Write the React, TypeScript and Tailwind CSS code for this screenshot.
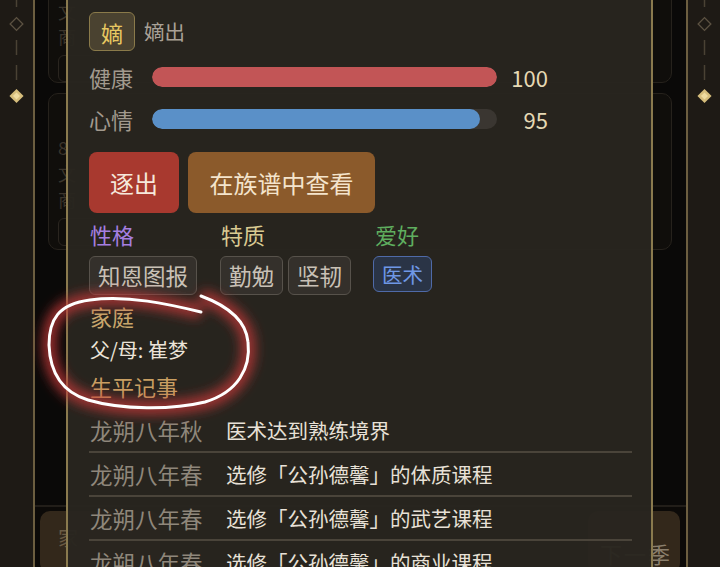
import React from "react";

const events = [
  ["龙朔八年秋", "医术达到熟练境界"],
  ["龙朔八年春", "选修「公孙德馨」的体质课程"],
  ["龙朔八年春", "选修「公孙德馨」的武艺课程"],
  ["龙朔八年春", "选修「公孙德馨」的商业课程"],
];

function SideDeco() {
  return (
    <svg width="32" height="120" viewBox="0 0 32 120" className="block">
      <line x1="16.5" y1="-4" x2="16.5" y2="7" stroke="#4a4234" strokeWidth="1.5" />
      <rect x="12" y="19.5" width="9" height="9" transform="rotate(45 16.5 24)" fill="none" stroke="#5c5242" strokeWidth="1.3" />
      <line x1="16.5" y1="40" x2="16.5" y2="55" stroke="#4a4234" strokeWidth="1.5" />
      <line x1="16.5" y1="65" x2="16.5" y2="80" stroke="#4a4234" strokeWidth="1.5" />
      <rect x="11.5" y="91" width="10" height="10" transform="rotate(45 16.5 96)" fill="#d6bd7c" />
      <rect x="14" y="93.5" width="5" height="5" transform="rotate(45 16.5 96)" fill="#f0dca0" />
    </svg>
  );
}

function Tag({ children, blue }: { children: React.ReactNode; blue?: boolean }) {
  return blue ? (
    <div className="h-[36px] px-[8px] flex items-center rounded-[6px] border-[1.5px] border-[#4f6aa8] bg-[#2a3446] text-[#6f98e6] text-[20.5px] leading-none">
      {children}
    </div>
  ) : (
    <div className="h-[39px] px-[8px] flex items-center rounded-[6px] border-[1.5px] border-[#57524b] bg-[#34302b] text-[#c9c1b6] text-[22.5px] leading-none">
      {children}
    </div>
  );
}

export default function App() {
  return (
    <div className="relative w-[720px] h-[567px] overflow-hidden bg-[#1e1a15] flex font-['Noto_Sans_CJK_SC','Noto_Sans',sans-serif]">
      {/* left deco */}
      <div className="w-[33px] shrink-0">
        <SideDeco />
      </div>

      {/* center page */}
      <div className="relative w-[655px] shrink-0 h-full border-x-2 border-[#6c5e40] bg-[#0a0908] flex flex-col">
        {/* underlying page (dimmed) */}
        <div className="flex flex-col gap-[10px] pl-[13px] pr-[14px] mt-[-80px]">
          <div className="h-[163px] rounded-[10px] border border-[#26221c] bg-[#100e0b] pl-[9px] pt-[78px] flex flex-col text-[18px] text-[#3b352c] leading-[25px]">
            <span>文</span>
            <span>商</span>
            <div className="mt-[6px] w-[40px] h-[28px] rounded-[6px] border border-[#2a251f]" />
          </div>
          <div className="h-[157px] rounded-[10px] border border-[#26221c] bg-[#100e0b] pl-[9px] pt-[40px] flex flex-col text-[18px] text-[#3b352c] leading-[26px]">
            <span>8</span>
            <span>文</span>
            <span>商</span>
            <div className="mt-[6px] w-[40px] h-[28px] rounded-[6px] border border-[#2a251f]" />
          </div>
        </div>
        <div className="mt-auto h-[62px] border-t-2 border-[#221e19] bg-[#0c0a08] flex items-start justify-between pl-[5px] pr-[6px] pt-[4px]">
          <div className="w-[120px] h-[62px] rounded-[10px] bg-[#33281b] text-[#6b5c46] text-[20px] pl-[18px] pt-[12px]">家</div>
          <div className="w-[92px] h-[62px] rounded-[10px] bg-[#33281b] text-[#8a7e6c] text-[22px] pl-[12px] pt-[26px] tracking-[2px]">下一季</div>
        </div>

        {/* modal */}
        <div className="absolute left-[31px] right-[33px] top-0 bottom-[-20px] border-x-2 border-[#8a7a4e] bg-[#29251f]/[0.96] pl-[21px] pr-[19px] pt-[12px] flex flex-col">
          {/* badge row */}
          <div className="flex items-center h-[39px]">
            <div className="w-[46px] h-[39px] rounded-[6px] border-[1.5px] border-[#8a7a4a] bg-[#4a4230] flex items-center justify-center text-[22px] text-[#e8c862] leading-none">
              嫡
            </div>
            <span className="ml-[9px] text-[20.5px] text-[#a9a197] leading-none">嫡出</span>
          </div>

          {/* bars */}
          <div className="mt-[12px] flex items-center h-[28px]">
            <span className="w-[63px] text-[22px] text-[#a29a8e] leading-none">健康</span>
            <div className="w-[345px] h-[20px] rounded-full bg-[#3a3530] overflow-hidden">
              <div className="h-full w-full rounded-full bg-[#c25556]" />
            </div>
            <span className="w-[51px] text-right text-[22px] text-[#e6d9b4] leading-none">100</span>
          </div>
          <div className="mt-[14px] flex items-center h-[28px]">
            <span className="w-[63px] text-[22px] text-[#a29a8e] leading-none">心情</span>
            <div className="w-[345px] h-[20px] rounded-full bg-[#3a3631] overflow-hidden">
              <div className="h-full rounded-full bg-[#5a90c8]" style={{ width: "95%" }} />
            </div>
            <span className="w-[51px] text-right text-[22px] text-[#e6d9b4] leading-none">95</span>
          </div>

          {/* buttons */}
          <div className="mt-[19px] flex gap-[9px]">
            <div className="w-[90px] h-[61px] rounded-[8px] bg-[#a8392f] flex items-center justify-center text-[24px] text-[#f6e8dc] leading-none">
              逐出
            </div>
            <div className="w-[187px] h-[61px] rounded-[8px] bg-[#8b5a2b] flex items-center justify-center text-[24px] text-[#f4e4cc] leading-none">
              在族谱中查看
            </div>
          </div>

          {/* traits */}
          <div className="mt-[6px] flex">
            <div className="w-[131px] flex flex-col">
              <span className="h-[30px] leading-[30px] text-[22px] text-[#a57fe0] pl-[1px]">性格</span>
              <div className="mt-[7px] flex gap-[5px]">
                <Tag>知恩图报</Tag>
              </div>
            </div>
            <div className="w-[153px] flex flex-col">
              <span className="h-[30px] leading-[30px] text-[22px] text-[#d9ca92] pl-[1px]">特质</span>
              <div className="mt-[7px] flex gap-[5px]">
                <Tag>勤勉</Tag>
                <Tag>坚韧</Tag>
              </div>
            </div>
            <div className="flex flex-col">
              <span className="h-[30px] leading-[30px] text-[22px] text-[#5fae5f] pl-[2px]">爱好</span>
              <div className="mt-[7px] flex gap-[5px]">
                <Tag blue>医术</Tag>
              </div>
            </div>
          </div>

          {/* family */}
          <span className="mt-[6px] h-[30px] leading-[30px] text-[22px] text-[#c8a66c] pl-[1px]">家庭</span>
          <span className="mt-[4px] h-[30px] leading-[30px] text-[20px] text-[#ece4d9] pl-[1px]">父/母: 崔梦</span>
          <span className="mt-[6px] h-[30px] leading-[30px] text-[22px] text-[#c99f62] pl-[1px]">生平记事</span>

          {/* events */}
          <div className="mt-[8px] flex flex-col">
            {events.map(([d, e], i) => (
              <div key={i} className="h-[44px] box-border border-b-2 border-[#4a443a] flex items-center">
                <span className="w-[137px] shrink-0 text-[22.5px] text-[#8f877b] leading-none pl-[1px]">{d}</span>
                <span className="text-[20.5px] text-[#e8e1d7] leading-none">{e}</span>
              </div>
            ))}
          </div>
        </div>
      </div>

      {/* right deco */}
      <div className="flex-1">
        <SideDeco />
      </div>

      {/* hand-drawn annotation */}
      <svg className="absolute inset-0 pointer-events-none" width="720" height="567" viewBox="0 0 720 567">
        <defs>
          <filter id="glow" x="-20%" y="-20%" width="140%" height="140%">
            <feGaussianBlur stdDeviation="6" />
          </filter>
        </defs>
        <path
          d="M 201 296 C 228 306, 246 320, 248 342 C 251 368, 238 392, 205 402 C 172 410, 122 410, 88 400 C 62 392, 50 372, 49 345 C 49 320, 58 304, 90 300 C 128 295, 168 304, 201 312"
          fill="none"
          stroke="#c2383a"
          strokeOpacity="0.8"
          strokeWidth="14"
          filter="url(#glow)"
        />
        <path
          d="M 201 296 C 228 306, 246 320, 248 342 C 251 368, 238 392, 205 402 C 172 410, 122 410, 88 400 C 62 392, 50 372, 49 345 C 49 320, 58 304, 90 300 C 128 295, 168 304, 201 312"
          fill="none"
          stroke="#ffffff"
          strokeWidth="3"
          strokeLinecap="round"
        />
      </svg>
    </div>
  );
}
